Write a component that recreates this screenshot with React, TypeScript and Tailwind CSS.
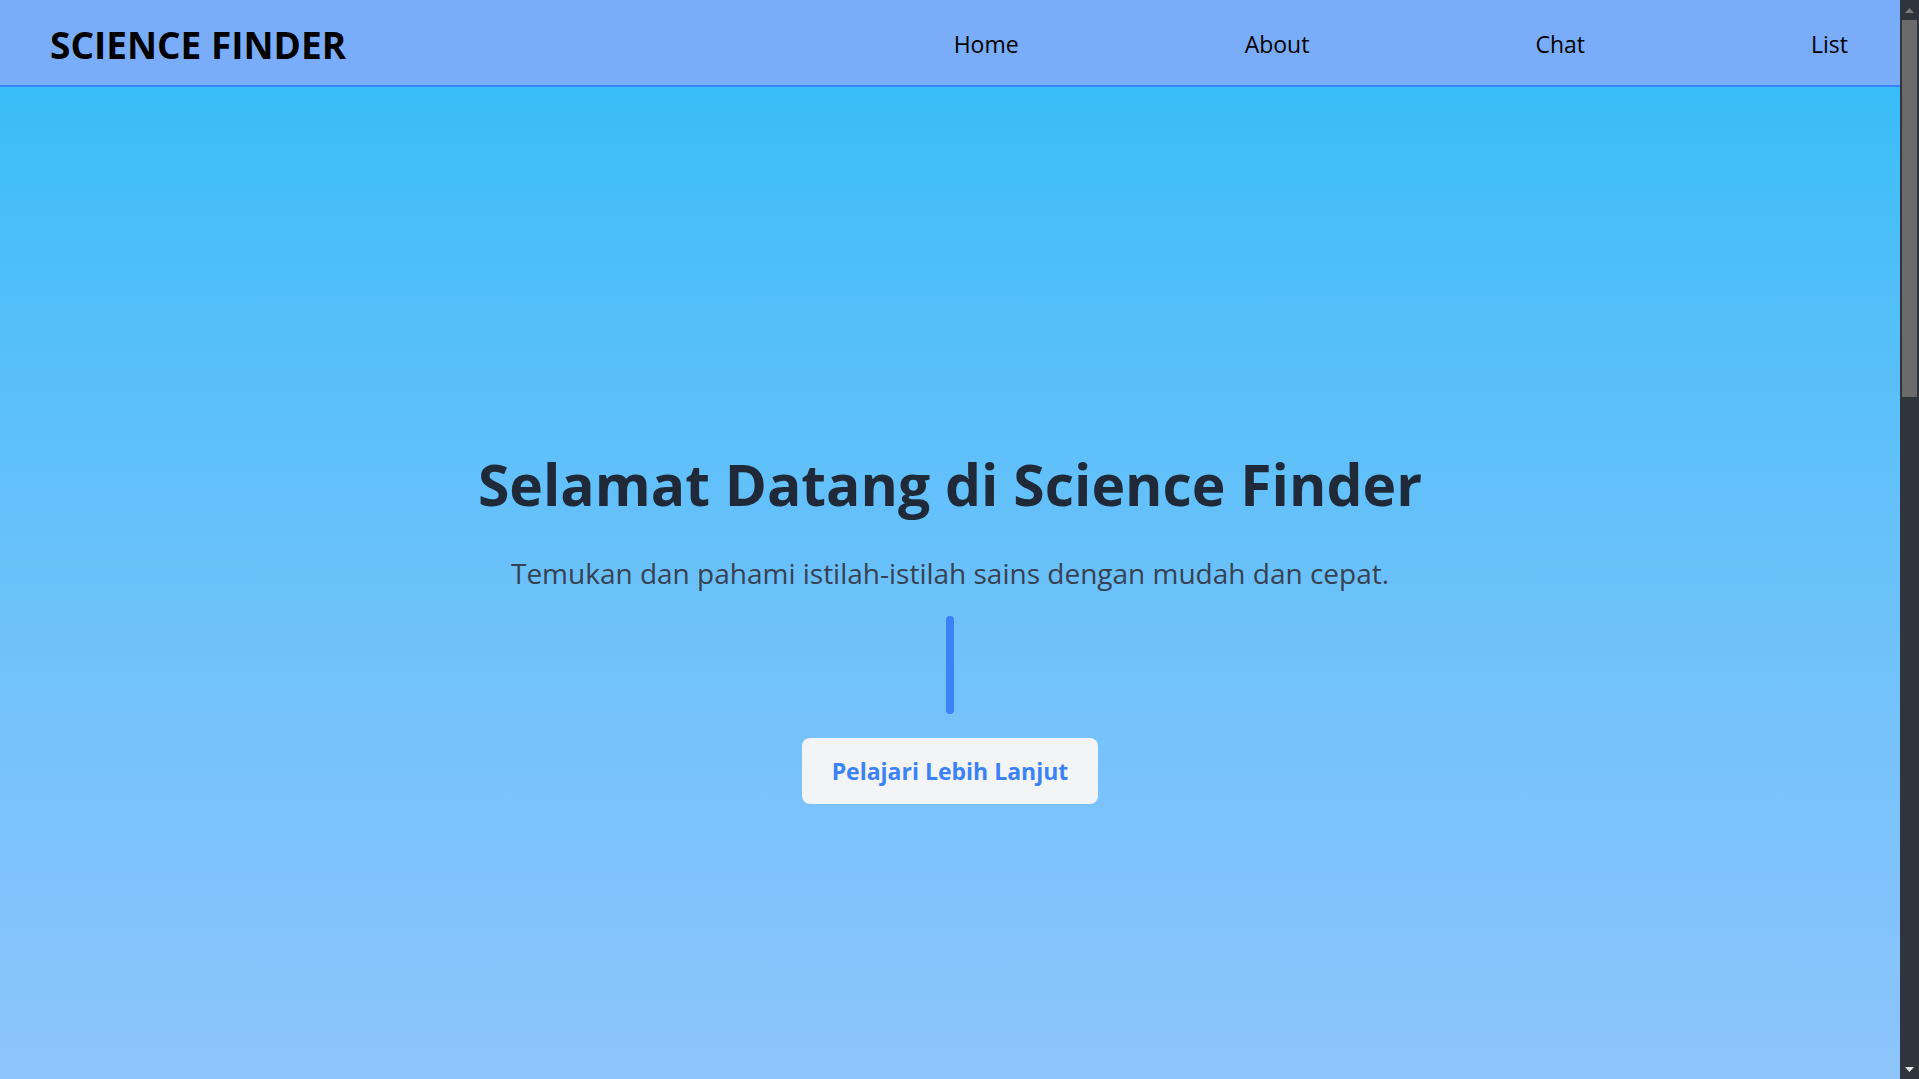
export default function App() {
  const links = ["Home", "About", "Chat", "List"];

  return (
    <div className="flex h-screen overflow-hidden font-['Open_Sans',sans-serif]">
      <div className="min-w-0 flex-1 overflow-hidden">
        {/* Top navigation */}
        <header className="flex h-[87px] items-center justify-between border-b-2 border-[#3b82f6] bg-[#7aadf9] pt-1 pr-[52px] pl-[50px]">
          <h1 className="text-[37px] font-bold text-black">SCIENCE FINDER</h1>
          <nav>
            <ul className="flex items-center gap-[226px] text-[23px] text-black">
              {links.map((link) => (
                <li key={link}>
                  <a href="#" className="hover:underline">
                    {link}
                  </a>
                </li>
              ))}
            </ul>
          </nav>
        </header>

        {/* Hero */}
        <section className="flex min-h-screen flex-col items-center justify-center bg-gradient-to-b from-[#38bdf8] to-[#93c5fd] px-4 pt-[6px] text-center">
          <h2 className="text-[57px] leading-none font-bold text-[#1f2937]">
            Selamat Datang di Science Finder
          </h2>
          <p className="mt-[39px] text-[28px] leading-[42px] text-[#374151]">
            Temukan dan pahami istilah-istilah sains dengan mudah dan cepat.
          </p>
          <div className="mt-[22px] h-[98px] w-2 rounded-full bg-[#3b82f6]" />
          <a
            href="#"
            className="mt-6 rounded-lg bg-[#f3f4f6] px-[30px] py-[17px] text-[23px] leading-8 font-bold text-[#3b82f6]"
          >
            Pelajari Lebih Lanjut
          </a>
        </section>
      </div>

      {/* Window scrollbar */}
      <aside className="flex w-[19px] shrink-0 flex-col bg-[#30343c]">
        <div className="flex h-[20px] items-center justify-center">
          <svg width="9" height="5" viewBox="0 0 9 5">
            <path d="M0 5 L4.5 0 L9 5 Z" fill="#7a7a7a" />
          </svg>
        </div>
        <div className="mx-[2px] h-[377px] bg-[#6b6b6b]" />
        <div className="flex-1" />
        <div className="flex h-[20px] items-center justify-center">
          <svg width="9" height="5" viewBox="0 0 9 5">
            <path d="M0 0 L9 0 L4.5 5 Z" fill="#e5e7eb" />
          </svg>
        </div>
      </aside>
    </div>
  );
}
